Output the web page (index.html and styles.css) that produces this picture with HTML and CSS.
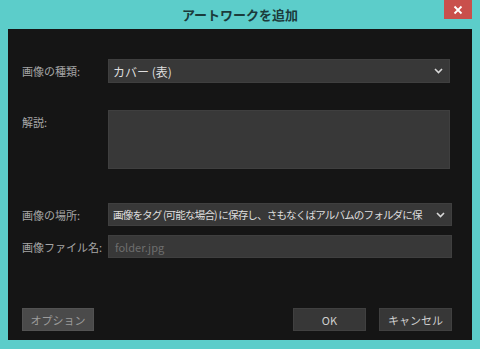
FILE: index.html
```html
<!DOCTYPE html>
<html lang="ja">
<head>
  <meta charset="UTF-8" />
  <title>アートワークを追加</title>
  <link rel="stylesheet" href="styles.css">
</head>
<body>

  <div class="ventana">
    <div class="titulo">
      <span>アートワークを追加</span>
      <button class="cerrar">
        <svg width="10" height="10" viewBox="0 0 10 10"><path d="M1.5 1.5 L8.5 8.5 M8.5 1.5 L1.5 8.5" stroke="#fff" stroke-width="1.8"/></svg>
      </button>
    </div>

    <div class="contenido">
      <div class="fila fila-tipo">
        <label>画像の種類:</label>
        <div class="select">
          <span>カバー (表)</span>
          <svg class="flecha" width="9" height="6" viewBox="0 0 9 6"><path d="M1 1 L4.5 4.5 L8 1" fill="none" stroke="#d8d8d8" stroke-width="1.6"/></svg>
        </div>
      </div>

      <div class="fila fila-desc">
        <label>解説:</label>
        <div class="area"></div>
      </div>

      <div class="fila fila-lugar">
        <label>画像の場所:</label>
        <div class="select">
          <span class="largo">画像をタグ (可能な場合) に保存し、さもなくばアルバムのフォルダに保</span>
          <svg class="flecha" width="9" height="6" viewBox="0 0 9 6"><path d="M1 1 L4.5 4.5 L8 1" fill="none" stroke="#d8d8d8" stroke-width="1.6"/></svg>
        </div>
      </div>

      <div class="fila fila-archivo">
        <label>画像ファイル名:</label>
        <div class="entrada">folder.jpg</div>
      </div>

      <div class="acciones">
        <button class="boton opcion">オプション</button>
        <div class="derecha">
          <button class="boton">OK</button>
          <button class="boton">キャンセル</button>
        </div>
      </div>
    </div>
  </div>

</body>
</html>
```

FILE: styles.css
```css
body {
  margin: 0;
  font-family: "Noto Sans CJK JP", "Noto Sans", sans-serif;
  background: #5ccdca;
}
.ventana {
  width: 480px;
  height: 349px;
  background: #5ccdca;
  position: relative;
}
.titulo {
  height: 29px;
  display: flex;
  align-items: center;
  justify-content: center;
  font-size: 13px;
  font-weight: bold;
  color: #1b3b3b;
}
.cerrar {
  position: absolute;
  top: 0;
  right: 8px;
  width: 28px;
  height: 19px;
  background: #c9504c;
  border: none;
  padding: 0;
  display: flex;
  align-items: center;
  justify-content: center;
}
.contenido {
  margin: 0 8px;
  height: 311px;
  background: #151515;
  padding: 30px 20px 0 14px;
  box-sizing: border-box;
  display: flex;
  flex-direction: column;
}
.fila {
  display: flex;
  align-items: center;
  margin-right: 2px;
}
.fila label {
  width: 86px;
  font-size: 11px;
  color: #a6a6a6;
  flex-shrink: 0;
}
.select, .area, .entrada {
  flex: 1;
  background: #383838;
  border: 1px solid #3f3f3f;
  box-sizing: border-box;
  min-width: 0;
}
.select {
  height: 24px;
  display: flex;
  align-items: center;
  padding: 0 6px 0 4px;
  font-size: 12px;
  color: #dedede;
}
.select span {
  flex: 1;
  white-space: nowrap;
  overflow: hidden;
}
.select .largo {
  font-size: 10.6px;
  letter-spacing: -0.9px;
}
.flecha {
  margin-left: 4px;
  flex-shrink: 0;
}
.fila-desc {
  margin-top: 27px;
  align-items: flex-start;
}
.fila-desc label {
  margin-top: 4px;
}
.area {
  height: 59px;
}
.fila-lugar {
  margin-top: 34px;
  margin-right: 0;
}
.fila-lugar .select {
  height: 23px;
}
.fila-archivo {
  margin-top: 9px;
  margin-right: 0;
}
.entrada {
  height: 23px;
  display: flex;
  align-items: center;
  padding: 0 6px;
  font-size: 11px;
  color: #6e6e6e;
}
.acciones {
  margin-top: 50px;
  display: flex;
  justify-content: space-between;
}
.derecha {
  display: flex;
  gap: 13px;
}
.boton {
  width: 73px;
  height: 23px;
  background: #373737;
  border: 1px solid #404040;
  color: #cfcfcf;
  font-family: "Noto Sans CJK JP", "Noto Sans", sans-serif;
  font-size: 11px;
  padding: 0;
}
.opcion {
  width: 72px;
  background: #4a4a4a;
  border-color: #525252;
  color: #9c9c9c;
}
```
